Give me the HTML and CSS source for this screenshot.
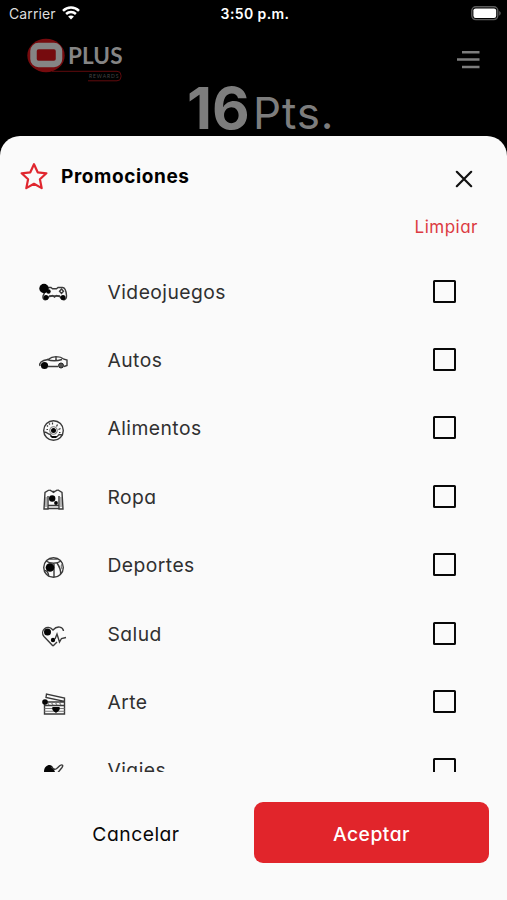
FILE: index.html
```html
<!DOCTYPE html>
<html lang="es">
<head>
<meta charset="utf-8">
<title>Promociones</title>
<link rel="stylesheet" href="styles.css">
</head>
<body>
<div class="screen">
  <header class="status">
    <div class="carrier"><span>Carrier</span>
      <svg width="18" height="14" viewBox="0 0 18 14" fill="none" stroke="#fff" stroke-width="2.5"><path d="M1 4.8C5.5.4 12.5.4 17 4.8M4.1 8c2.8-2.7 7-2.7 9.8 0"/><path d="M9 13.5 6.1 10.5c1.6-1.5 4.2-1.5 5.8 0z" fill="#fff" stroke="none"/></svg>
    </div>
    <div class="time">3:50 p.m.</div>
    <svg class="battery" width="30" height="15" viewBox="0 0 30 15"><rect x=".8" y=".8" width="26" height="12.8" rx="4" fill="none" stroke="#5c5c5c" stroke-width="1.4"/><rect x="2.4" y="2.4" width="22.8" height="9.6" rx="2.2" fill="#fff"/><path d="M28.2 5c2 .8 2 3.800 0 4.600z" fill="#5c5c5c"/></svg>
  </header>
  <div class="brandbar">
    <div class="brand">
      <svg width="96" height="44" viewBox="0 0 96 44"><ellipse cx="19" cy="17.500" rx="18.700" ry="16.700" fill="#760b0e"/><rect x="6.500" y="8" width="25.500" height="18" rx="5" fill="#760b0e" stroke="#858585" stroke-width="6.500"/><path d="M25 33.300H90q4 0 4 4v1.500q0 4-4 4H61" fill="none" stroke="#610a0d" stroke-width="1"/></svg>
      <span class="plus">PLUS</span>
      <span class="rewards">REWARDS</span>
    </div>
    <svg class="menu" width="23" height="20" viewBox="0 0 23 20" stroke="#7d7d7d" stroke-width="2.500"><path d="M5 2.300h17.500M0 9.600h22.500M5 17h17.500"/></svg>
  </div>
  <div class="points"><span class="count">16</span><span class="unit">Pts.</span></div>

  <main class="sheet">
    <div class="sheet-head">
      <svg class="star" width="28" height="28" viewBox="0 0 28 28" fill="none" stroke="#e0262e" stroke-width="2.200" stroke-linejoin="round"><path d="M14 2.200l3.700 8.100 8.700 1-6.500 6 1.800 8.800-7.700-4.300-7.700 4.300 1.800-8.800-6.500-6 8.700-1z"/></svg>
      <h1>Promociones</h1>
      <svg class="close" width="18" height="18" viewBox="0 0 18 18" stroke="#111" stroke-width="2.200" stroke-linecap="round"><path d="M1.800 1.800l14.400 14.400M16.200 1.800 1.800 16.200"/></svg>
    </div>
    <div class="clear"><span>Limpiar</span></div>
    <ul class="list">
      <li><svg class="icon" viewBox="0 0 30 24"><path class="l" d="M9 5.500h4l1.500 1.200h4L20 5.500h4.500c3 0 3.700 4 4 8 .3 4.500-3.500 5.500-5.500 2.500l-1.500-2H11.500l-1.500 2c-2 3-5.500 2-5-2z"/><circle cx="6" cy="6.500" r="4.700"/><circle cx="10.500" cy="9.500" r="2.200"/><circle cx="8" cy="15.500" r="2.500"/><circle cx="25" cy="15.500" r="2.500"/><path class="l" d="M12 14.500l2.500-1 2 1.500 2-1.500 3 1M23.500 7l2 2.200-2 2.300-2-2.300z"/></svg><span class="name">Videojuegos</span><i class="box"></i></li>
      <li><svg class="icon" viewBox="0 0 30 24"><path class="l" d="M2 16c-1-3 1-5.500 8-6.500 5-4 12-3.500 16-.3l3 .8v5.500l-3 1M10 16.500h10M9 9.500c4 1.500 9 2 15 0M18 6v4"/><circle cx="6.500" cy="15.500" r="3.600"/><circle class="g" cx="23" cy="15.500" r="2.500"/></svg><span class="name">Autos</span><i class="box"></i></li>
      <li><svg class="icon" viewBox="0 0 30 24"><circle class="l" cx="15.500" cy="12.500" r="9.800"/><circle class="s" cx="15.500" cy="12.500" r="3.700"/><circle cx="15.500" cy="12.500" r="2.500"/><path class="l" d="M6 14.500c3-1.500 3 2 6 1.700 2 4 7 4 9 .3l3.500.5"/><path d="M12 18h7l-1 2h-4z"/><path class="d" d="M9 7.500l1 1M14.500 4.500v2M19.500 6.500l-1 2M22.500 10.500l-2 1M8.500 11.500H10M11 5.500l1 1M21 14.500h1.500"/></svg><span class="name">Alimentos</span><i class="box"></i></li>
      <li><svg class="icon" viewBox="0 0 30 24"><path class="l" d="M11 3c2.500 1.500 6.500 1.500 9 0l4 2.500 1 16.500h-4V9M11 3 7 5.500 6 22h4V9M10 18.500h11M10 21.500h11M12 3l3.500 2.500L19 3"/><path class="s" d="M8 10v10M23 10v10"/><circle cx="14.200" cy="11.500" r="3.200"/><circle cx="18" cy="16" r="1.900"/></svg><span class="name">Ropa</span><i class="box"></i></li>
      <li><svg class="icon" viewBox="0 0 30 24"><circle class="l" cx="15.500" cy="12.500" r="9.800"/><path class="l" d="M8 6c4 3 11 3 15 0M16 8v14M19 8c2 3 4 8 3.500 11M6.500 15.500c3 0 4 3 4 6"/><path class="s" d="M11 4.500h9M24 9c-2 3 0 5 1 6"/><circle cx="12" cy="12.500" r="4.300"/></svg><span class="name">Deportes</span><i class="box"></i></li>
      <li><svg class="icon" viewBox="0 0 30 24"><path class="l" d="M15 22 6 12.500C1.500 7 9-.5 15 6c4.500-5 10-3 10.500 1M15 22l4-4M17 15l2-5 2.500 8 2-3.500 4.500-1"/><circle cx="9.500" cy="8" r="3.500"/><circle cx="15" cy="16" r="2.200"/></svg><span class="name">Salud</span><i class="box"></i></li>
      <li><svg class="icon" viewBox="0 0 30 24"><path class="l" d="M8 5.500 8.500 2 26.500 6v3.500L8 5.500zM6.500 10h20v12h-20zM6.500 13.500h20"/><path class="s" d="M6.500 16.500h20M6.500 19.300h20M9 10l2 3M13 10l2 3M17 10l2 3M21 10l2 3"/><circle cx="7" cy="10" r="2.800"/><path d="M14.500 15h7c1 3-1 4-3.500 6-2.500-2-4.500-3-3.500-6z"/></svg><span class="name">Arte</span><i class="box"></i></li>
      <li><svg class="icon" viewBox="0 0 30 24"><path d="M6 12c0-8 8-8.500 9-4.500l2 4.500z"/><path class="l" d="M13 7l3 2c2 1 2 0 6-3.500 2.500-1.500 3.500 0 2 2l-4 5"/></svg><span class="name">Viajes</span><i class="box"></i></li>
    </ul>
    <footer class="actions">
      <button class="cancel"><span>Cancelar</span></button>
      <button class="accept"><span>Aceptar</span></button>
    </footer>
  </main>
</div>
</body>
</html>
```
FILE: styles.css
```css
* { box-sizing: border-box; margin: 0; padding: 0; }
body { background: #000; font-family: Inter, "Open Sans", sans-serif; font-feature-settings: "cv11" 1; }
.screen { width: 507px; height: 900px; overflow: hidden; display: flex; flex-direction: column; }
.status { height: 28px; flex: none; display: grid; grid-template-columns: 1fr auto 1fr; align-items: center; padding: 0 6px 0 9px; color: #fff; font-feature-settings: normal; }
.carrier { display: flex; align-items: center; gap: 6px; font-size: 14px; color: #ddd; letter-spacing: .1px; }
.carrier span, .time { margin-top: -2px; }
.carrier svg { margin-top: -2px; }
.time { font-size: 14px; font-weight: 600; letter-spacing: .4px; }
.battery { justify-self: end; margin-top: -1px; }
.brandbar { height: 56px; flex: none; display: flex; justify-content: space-between; padding: 10px 27px 0 27px; }
.brand { position: relative; width: 96px; height: 44px; }
.brand svg { display: block; }
.plus { position: absolute; left: 41px; top: 5px; font: 700 22.500px/26px Lato, sans-serif; color: #858585; letter-spacing: .1px; }
.rewards { position: absolute; left: 62px; top: 35px; font: 5px/7px Lato, sans-serif; letter-spacing: .9px; color: #454545; }
.menu { margin-top: 12px; }
.points { height: 52px; flex: none; display: flex; align-items: baseline; padding-left: 187px; color: #7d7d7d; line-height: 48px; white-space: nowrap; }
.count { font-size: 58px; font-weight: 700; width: 66px; }
.unit { font-size: 44px; font-weight: 400; letter-spacing: .8px; }
.sheet { flex: 1; background: #fafafa; border-radius: 20px 20px 0 0; display: flex; flex-direction: column; }
.sheet-head { height: 80px; flex: none; display: flex; align-items: center; padding: 0 34px 0 20px; }
.sheet-head h1 { font-size: 19px; font-weight: 700; letter-spacing: .6px; margin-left: 13px; flex: 1; color: #000; }
.close { margin-top: 5px; }
.clear { height: 41px; flex: none; text-align: right; padding-right: 29px; font-size: 17px; line-height: 23px; letter-spacing: .5px; color: #dc3a42; }
.list { list-style: none; height: 515px; flex: none; overflow: hidden; }
.list li { height: 68.4px; display: flex; align-items: center; padding: 0 51px 0 38px; }
.icon { width: 30px; height: 24px; margin-top: 5px; fill: #050505; }
.icon .l { fill: none; stroke: #3a3a3a; stroke-width: 1.4; }
.icon .s { fill: none; stroke: #777; stroke-width: 1.1; }
.icon .g { fill: #555; stroke: #222; }
.icon .d { fill: none; stroke: #333; stroke-width: 1.2; }
.name { flex: 1; margin: 1px 0 0 39.500px; font-size: 19.300px; letter-spacing: .45px; color: #303030; }
.box { width: 23px; height: 23px; border: 2.500px solid #080808; border-radius: 1.500px; }
.actions { flex: 1; display: flex; align-items: flex-start; padding: 30px 18px 0; }
.actions button { border: 0; height: 61px; padding-top: 2px; font: inherit; font-feature-settings: inherit; font-size: 19.300px; letter-spacing: .5px; }
.actions .cancel { width: 236px; background: transparent; color: #080808; }
.actions .accept { width: 235px; border-radius: 9px; background: #e1252b; color: #fff; font-weight: 500; }
```
